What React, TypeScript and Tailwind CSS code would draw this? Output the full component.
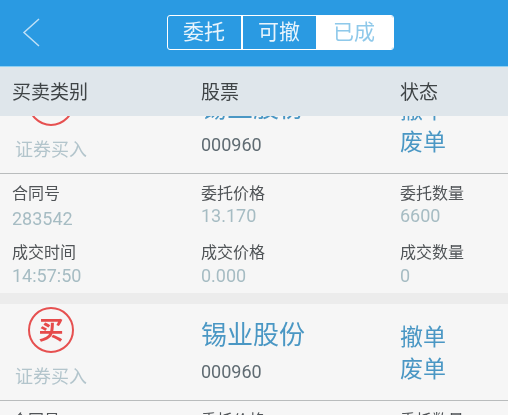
const cjk = "font-['Roboto','Noto_Sans_CJK_SC',sans-serif]";

function Card({ name, status1 }: { name: string; status1: string }) {
  return (
    <div className="bg-[#f6f6f6]">
      <div className="grid h-[97px] grid-cols-[201px_199px_1fr] border-b border-[#b9bcbd]">
        <div className="flex flex-col items-center pr-[99px]">
          <div className="mt-[3px] flex h-[46px] w-[46px] shrink-0 items-center justify-center rounded-full border-2 border-[#e65050] text-[25px] leading-none font-bold text-[#e64a4a]">
            买
          </div>
          <div className="mt-[11px] text-[18px] leading-[26px] whitespace-nowrap text-[#b3c5cc]">证券买入</div>
        </div>
        <div className="flex flex-col">
          <div className="mt-[13px] text-[26px] leading-[36px] text-[#4a97c4]">{name}</div>
          <div className="mt-[7px] text-[18px] leading-[24px] text-[#5f6b72]">000960</div>
        </div>
        <div className="flex flex-col pt-[18px] text-[23px] leading-[32px] text-[#4a97c4]">
          <div>{status1}</div>
          <div>废单</div>
        </div>
      </div>
      <div className="grid h-[119px] grid-cols-[189px_199px_1fr] grid-rows-[59px_59px] pt-[8px] pl-[12px] text-[#505457]">
        <Field label="合同号" value="283542" valueClass="mt-[1px]" />
        <Field label="委托价格" value="13.170" valueClass="mt-[-2px]" />
        <Field label="委托数量" value="6600" valueClass="mt-[-2px]" />
        <Field label="成交时间" value="14:57:50" valueClass="mt-[-1px]" />
        <Field label="成交价格" value="0.000" valueClass="mt-[-1px]" />
        <Field label="成交数量" value="0" valueClass="mt-[-1px]" />
      </div>
    </div>
  );
}

function Field({ label, value, valueClass }: { label: string; value: string; valueClass: string }) {
  return (
    <div className="flex flex-col">
      <div className="text-[16px] leading-[24px]">{label}</div>
      <div className={`text-[18px] leading-[24px] text-[#a6bcc3] ${valueClass}`}>{value}</div>
    </div>
  );
}

export default function App() {
  return (
    <div className={`flex h-[415px] w-[508px] flex-col overflow-hidden bg-[#f6f6f6] blur-[0.35px] ${cjk}`}>
      <header className="relative flex h-[67px] shrink-0 items-center justify-center border-b border-[#8fd0f2] bg-[#2a9ae2]">
        <svg className="absolute top-[17px] left-[21px]" width="20" height="30" viewBox="0 0 20 30" fill="none">
          <path d="M18 2 L3 15.5 L18 29" stroke="#bfe0f6" strokeWidth="1.5" />
        </svg>
        <div className="mt-[-2px] ml-[52px] flex h-[35px] w-[227px] overflow-hidden rounded-[3px] border border-white text-[21px] leading-none">
          <div className="flex w-[75px] items-center justify-center border-r-2 border-white text-[#e8f4fc]">委托</div>
          <div className="flex w-[73px] items-center justify-center text-[#e8f4fc]">可撤</div>
          <div className="flex flex-1 items-center justify-center bg-white text-[#8fc9ea]">已成</div>
        </div>
      </header>
      <div className="grid h-[49px] shrink-0 grid-cols-[189px_199px_1fr] items-center bg-[#dfe6eb] pt-[3px] pl-[12px] text-[19px] text-[#3f4446]">
        <div>买卖类别</div>
        <div>股票</div>
        <div>状态</div>
      </div>
      <div className="flex-1 overflow-hidden">
        <div className="mt-[-39px] flex flex-col gap-[11px] bg-[#ececec]">
          <Card name="锡业股份" status1="撤单" />
          <Card name="锡业股份" status1="撤单" />
        </div>
      </div>
    </div>
  );
}
